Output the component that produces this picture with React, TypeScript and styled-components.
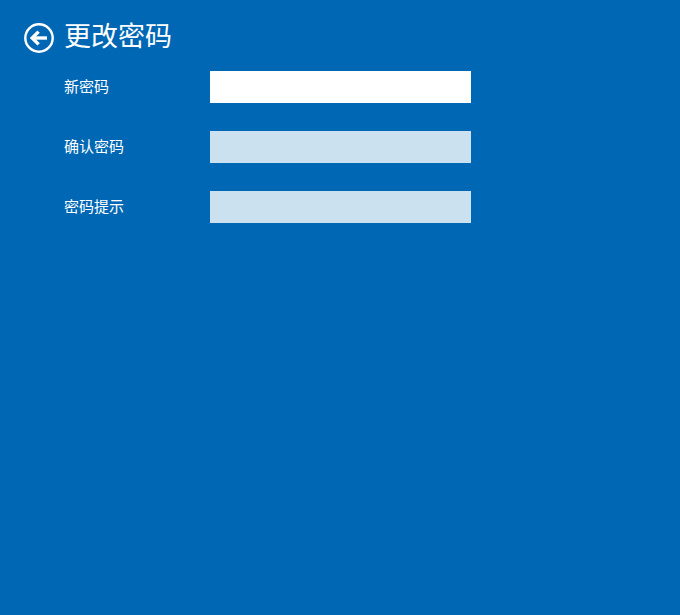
import React from "react";
import styled, { createGlobalStyle } from "styled-components";

const GlobalStyle = createGlobalStyle`
  html, body {
    margin: 0;
    padding: 0;
    background: #0067b4;
  }
`;

const Page = styled.div`
  width: 680px;
  height: 615px;
  overflow: hidden;
  box-sizing: border-box;
  padding: 16px 0 0 24px;
  background: #0067b4;
  color: #fff;
  font-family: "Noto Sans CJK SC", "Liberation Sans", sans-serif;
`;

const Header = styled.div`
  height: 40px;
  display: flex;
  align-items: center;
  gap: 10px;
`;

const BackButton = styled.div`
  width: 30px;
  height: 30px;
  margin-top: 4px;
  display: flex;
`;

const Title = styled.h1`
  margin: -2px 0 0;
  font-size: 27px;
  line-height: 40px;
  font-weight: 400;
`;

const Form = styled.div`
  margin: 15px 0 0 40px;
  display: flex;
  flex-direction: column;
  gap: 28px;
`;

const Row = styled.div`
  display: flex;
  align-items: center;
  height: 32px;
`;

const Label = styled.label`
  width: 146px;
  font-size: 15px;
  line-height: 32px;
  margin-top: -3px;
`;

const Field = styled.div<{ $active?: boolean }>`
  width: 261px;
  height: 32px;
  background: ${(p) => (p.$active ? "#ffffff" : "#cce1f0")};
`;

const fields = [
  { label: "新密码", active: true },
  { label: "确认密码", active: false },
  { label: "密码提示", active: false },
];

export default function App() {
  return (
    <Page>
      <GlobalStyle />
      <Header>
        <BackButton>
          <svg width="30" height="30" viewBox="0 0 30 30" fill="none" stroke="#fff">
            <circle cx="15" cy="15" r="13.7" strokeWidth="2.4" />
            <path d="M23 15H10" strokeWidth="3.4" />
            <path d="M14.6 8.6L8.2 15L14.6 21.4" strokeWidth="3.4" />
          </svg>
        </BackButton>
        <Title>更改密码</Title>
      </Header>
      <Form>
        {fields.map((f) => (
          <Row key={f.label}>
            <Label>{f.label}</Label>
            <Field $active={f.active} />
          </Row>
        ))}
      </Form>
    </Page>
  );
}
